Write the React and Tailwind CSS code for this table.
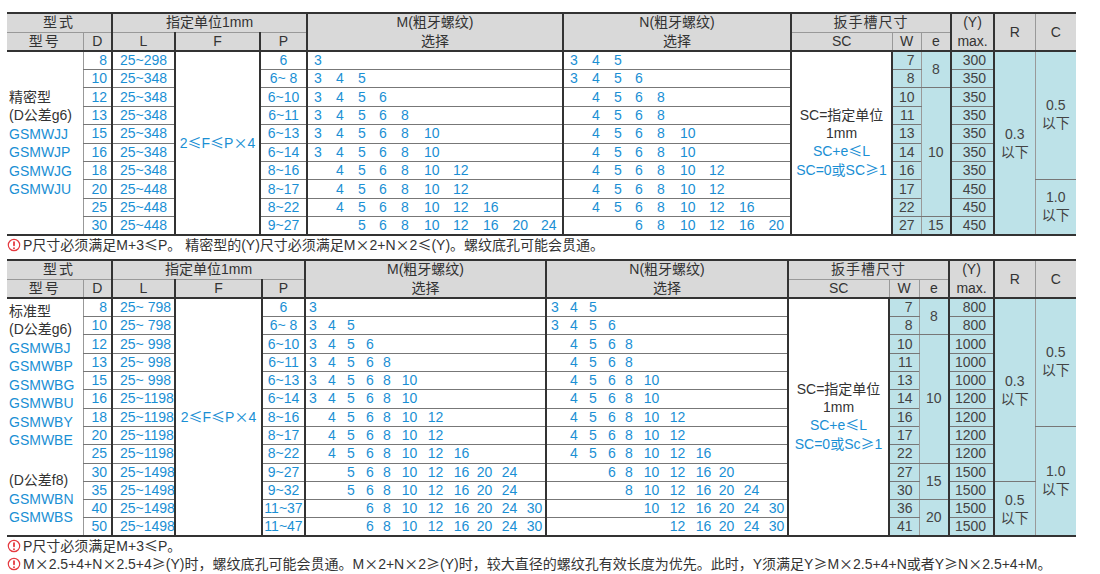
import React from 'react';

const FONT = "font-['Liberation_Sans','Noto_Sans_CJK_SC',sans-serif]";
const NARROW = "font-['Liberation_Sans_Narrow','Liberation_Sans','Noto_Sans_CJK_SC',sans-serif]";
const BLUE = 'text-[#1a8fd4]';
const TEAL = 'bg-[#bde2e8]';
const HEAD = 'bg-[#d9d9d9]';
const THICK = 'border-l-2 border-l-[#333]';
const THIN = 'border-l border-l-[#999]';

const bottom = (last) => (last ? 'border-b-2 border-b-[#333]' : 'border-b border-b-[#777]');

// ≤ ≥ × come out full width in the original, as in a CJK face
function fmt(str) {
  return str.split(/([≤≥×])/).map((part, i) =>
    /[≤≥×]/.test(part) ? (
      <span key={i} className="font-['Noto_Sans_CJK_SC',sans-serif]">{part}</span>
    ) : (
      part
    )
  );
}

const precise = {
  cols: ['w-[76px]', 'w-[29px]', 'w-[63px]', 'w-[85px]', 'w-[47px]', 'w-[256px]', 'w-[228px]', 'w-[101px]', 'w-[29px]', 'w-[30px]', 'w-[43px]', 'w-[41px]', 'w-[41px]'],
  rowH: 'h-[18.4px]',
  num: FONT,
  slots: [3, 4, 5, 6, 8, 10, 12, 16, 20, 24],
  grid: 'grid-cols-[22px_22px_21px_22px_23px_29px_30px_29.5px_28.5px_25px]',
  mPad: 'pl-[6px]',
  nPad: 'pl-[6px]',
  models: [
    { start: 0, span: 10, pad: '', lines: [['精密型', 0], ['(D公差g6)', 0], ['GSMWJJ', 1], ['GSMWJP', 1], ['GSMWJG', 1], ['GSMWJU', 1]] },
  ],
  rows: [
    [8, '25~298', '6', [3], [3, 4, 5], 7, 300],
    [10, '25~348', '6~ 8', [3, 4, 5], [3, 4, 5, 6], 8, 350],
    [12, '25~348', '6~10', [3, 4, 5, 6], [4, 5, 6, 8], 10, 350],
    [13, '25~348', '6~11', [3, 4, 5, 6, 8], [4, 5, 6, 8], 11, 350],
    [15, '25~348', '6~13', [3, 4, 5, 6, 8, 10], [4, 5, 6, 8, 10], 13, 350],
    [16, '25~348', '6~14', [3, 4, 5, 6, 8, 10], [4, 5, 6, 8, 10], 14, 350],
    [18, '25~348', '8~16', [4, 5, 6, 8, 10, 12], [4, 5, 6, 8, 10, 12], 16, 350],
    [20, '25~448', '8~17', [4, 5, 6, 8, 10, 12], [4, 5, 6, 8, 10, 12], 17, 450],
    [25, '25~448', '8~22', [4, 5, 6, 8, 10, 12, 16], [4, 5, 6, 8, 10, 12, 16], 22, 450],
    [30, '25~448', '9~27', [5, 6, 8, 10, 12, 16, 20, 24], [6, 8, 10, 12, 16, 20], 27, 450],
  ],
  e: [{ start: 0, span: 2, v: '8' }, { start: 2, span: 7, v: '10' }, { start: 9, span: 1, v: '15' }],
  r: [{ start: 0, span: 10, v: '0.3' }],
  c: [{ start: 0, span: 7, v: '0.5' }, { start: 7, span: 3, v: '1.0' }],
  scLast: 'SC=0或SC≥1',
};

const standard = {
  cols: ['w-[76px]', 'w-[29px]', 'w-[63px]', 'w-[87px]', 'w-[43px]', 'w-[241px]', 'w-[242px]', 'w-[101px]', 'w-[30px]', 'w-[30px]', 'w-[45px]', 'w-[41px]', 'w-[41px]'],
  rowH: 'h-[18.3px]',
  num: NARROW,
  slots: [3, 4, 5, 6, 8, 10, 12, 16, 20, 24, 30],
  grid: 'grid-cols-[19px_19px_19px_17px_18.8px_26px_26px_23px_25px_25px_20px]',
  mPad: 'pl-[3px]',
  nPad: 'pl-[4px]',
  models: [
    { start: 0, span: 9, pad: 'pb-[11px]', lines: [['标准型', 0], ['(D公差g6)', 0], ['GSMWBJ', 1], ['GSMWBP', 1], ['GSMWBG', 1], ['GSMWBU', 1], ['GSMWBY', 1], ['GSMWBE', 1]] },
    { start: 9, span: 4, pad: '', lines: [['(D公差f8)', 0], ['GSMWBN', 1], ['GSMWBS', 1]] },
  ],
  rows: [
    [8, '25~ 798', '6', [3], [3, 4, 5], 7, 800],
    [10, '25~ 798', '6~ 8', [3, 4, 5], [3, 4, 5, 6], 8, 800],
    [12, '25~ 998', '6~10', [3, 4, 5, 6], [4, 5, 6, 8], 10, 1000],
    [13, '25~ 998', '6~11', [3, 4, 5, 6, 8], [4, 5, 6, 8], 11, 1000],
    [15, '25~ 998', '6~13', [3, 4, 5, 6, 8, 10], [4, 5, 6, 8, 10], 13, 1000],
    [16, '25~1198', '6~14', [3, 4, 5, 6, 8, 10], [4, 5, 6, 8, 10], 14, 1200],
    [18, '25~1198', '8~16', [4, 5, 6, 8, 10, 12], [4, 5, 6, 8, 10, 12], 16, 1200],
    [20, '25~1198', '8~17', [4, 5, 6, 8, 10, 12], [4, 5, 6, 8, 10, 12], 17, 1200],
    [25, '25~1198', '8~22', [4, 5, 6, 8, 10, 12, 16], [4, 5, 6, 8, 10, 12, 16], 22, 1200],
    [30, '25~1498', '9~27', [5, 6, 8, 10, 12, 16, 20, 24], [6, 8, 10, 12, 16, 20], 27, 1500],
    [35, '25~1498', '9~32', [5, 6, 8, 10, 12, 16, 20, 24], [8, 10, 12, 16, 20, 24], 30, 1500],
    [40, '25~1498', '11~37', [6, 8, 10, 12, 16, 20, 24, 30], [10, 12, 16, 20, 24, 30], 36, 1500],
    [50, '25~1498', '11~47', [6, 8, 10, 12, 16, 20, 24, 30], [12, 16, 20, 24, 30], 41, 1500],
  ],
  e: [{ start: 0, span: 2, v: '8' }, { start: 2, span: 7, v: '10' }, { start: 9, span: 2, v: '15' }, { start: 11, span: 2, v: '20' }],
  r: [{ start: 0, span: 10, v: '0.3' }, { start: 10, span: 3, v: '0.5' }],
  c: [{ start: 0, span: 7, v: '0.5' }, { start: 7, span: 6, v: '1.0' }],
  scLast: 'SC=0或Sc≥1',
};

function Slots({ slots, grid, pad, values }) {
  return (
    <div className={`grid ${grid} ${pad}`}>
      {slots.map((s) => (
        <span key={s} className="whitespace-nowrap">{values.includes(s) ? s : ''}</span>
      ))}
    </div>
  );
}

function SpecTable({ t }) {
  const n = t.rows.length;
  const groupAt = (list, i) => list.find((g) => g.start === i);
  const ends = (g) => g.start + g.span === n;

  return (
    <table className={`table-fixed border-collapse w-[1069px] text-[14px] leading-[17px] text-[#333] ${FONT}`}>
      <colgroup>
        {t.cols.map((c, i) => (
          <col key={i} className={c} />
        ))}
      </colgroup>
      <thead>
        <tr className="h-[19px]">
          <th colSpan={2} className={`${HEAD} font-normal tracking-[2px] border-t-2 border-t-[#333] border-b border-b-[#999]`}>型式</th>
          <th colSpan={3} className={`${HEAD} font-normal border-t-2 border-t-[#333] border-b border-b-[#999] ${THICK}`}>指定单位1mm</th>
          <th rowSpan={2} className={`${HEAD} font-normal border-t-2 border-t-[#333] border-b-2 border-b-[#333] ${THICK}`}>
            <div>M(粗牙螺纹)</div>
            <div className="mt-[2px]">选择</div>
          </th>
          <th rowSpan={2} className={`${HEAD} font-normal border-t-2 border-t-[#333] border-b-2 border-b-[#333] ${THICK}`}>
            <div>N(粗牙螺纹)</div>
            <div className="mt-[2px]">选择</div>
          </th>
          <th colSpan={3} className={`${HEAD} font-normal tracking-[1px] border-t-2 border-t-[#333] border-b border-b-[#999] ${THICK}`}>扳手槽尺寸</th>
          <th rowSpan={2} className={`${HEAD} font-normal border-t-2 border-t-[#333] border-b-2 border-b-[#333] ${THICK}`}>
            <div>(Y)</div>
            <div className="mt-[2px]">max.</div>
          </th>
          <th rowSpan={2} className={`${HEAD} font-normal border-t-2 border-t-[#333] border-b-2 border-b-[#333] ${THICK}`}>R</th>
          <th rowSpan={2} className={`${HEAD} font-normal border-t-2 border-t-[#333] border-b-2 border-b-[#333] ${THIN}`}>C</th>
        </tr>
        <tr className="h-[19px]">
          <th className={`${HEAD} font-normal tracking-[2px] border-b-2 border-b-[#333]`}>型号</th>
          <th className={`${HEAD} font-normal border-b-2 border-b-[#333] ${THIN}`}>D</th>
          <th className={`${HEAD} font-normal border-b-2 border-b-[#333] ${THICK}`}>L</th>
          <th className={`${HEAD} font-normal border-b-2 border-b-[#333] ${THICK}`}>F</th>
          <th className={`${HEAD} font-normal border-b-2 border-b-[#333] ${THICK}`}>P</th>
          <th className={`${HEAD} font-normal border-b-2 border-b-[#333] ${THICK}`}>SC</th>
          <th className={`${HEAD} font-normal border-b-2 border-b-[#333] ${THIN}`}>W</th>
          <th className={`${HEAD} font-normal border-b-2 border-b-[#333] ${THIN}`}>e</th>
        </tr>
      </thead>
      <tbody>
        {t.rows.map(([d, l, p, m, nn, w, y], i) => {
          const last = i === n - 1;
          const model = groupAt(t.models, i);
          const e = groupAt(t.e, i);
          const r = groupAt(t.r, i);
          const c = groupAt(t.c, i);
          return (
            <tr key={i} className={t.rowH}>
              {model && (
                <td rowSpan={model.span} className={`p-0 pl-[2px] align-middle leading-[18.5px] ${model.pad} ${ends(model) ? 'border-b-2 border-b-[#333]' : ''}`}>
                  {model.lines.map(([txt, isBlue]) => (
                    <div key={txt} className={`whitespace-nowrap ${isBlue ? BLUE : ''}`}>{txt}</div>
                  ))}
                </td>
              )}
              <td className={`p-0 pr-[4px] text-right ${BLUE} ${t.num} ${THIN} ${bottom(last)}`}>{d}</td>
              <td className={`p-0 pl-[7px] whitespace-pre ${BLUE} ${t.num} ${THICK} ${bottom(last)}`}>{l}</td>
              {i === 0 && (
                <td rowSpan={n} className={`p-0 text-center whitespace-nowrap ${BLUE} ${THICK} border-b-2 border-b-[#333]`}>{fmt('2≤F≤P×4')}</td>
              )}
              <td className={`p-0 text-center whitespace-pre ${BLUE} ${t.num} ${THICK} ${bottom(last)}`}>{p}</td>
              <td className={`p-0 ${BLUE} ${t.num} ${THICK} ${bottom(last)}`}>
                <Slots slots={t.slots} grid={t.grid} pad={t.mPad} values={m} />
              </td>
              <td className={`p-0 ${BLUE} ${t.num} ${THICK} ${bottom(last)}`}>
                <Slots slots={t.slots} grid={t.grid} pad={t.nPad} values={nn} />
              </td>
              {i === 0 && (
                <td rowSpan={n} className={`p-0 text-center leading-[17.5px] ${THICK} border-b-2 border-b-[#333]`}>
                  <div className="whitespace-nowrap">SC=指定单位</div>
                  <div>1mm</div>
                  <div className={BLUE}>{fmt('SC+e≤L')}</div>
                  <div className={`whitespace-nowrap ${BLUE}`}>{fmt(t.scLast)}</div>
                </td>
              )}
              <td className={`p-0 pr-[6px] text-right text-[#444] ${t.num} ${TEAL} ${THICK} ${bottom(last)}`}>{w}</td>
              {e && (
                <td rowSpan={e.span} className={`p-0 text-center text-[#444] ${t.num} ${TEAL} ${THIN} ${bottom(ends(e))}`}>{e.v}</td>
              )}
              <td className={`p-0 pr-[7px] text-right text-[#444] ${t.num} ${TEAL} ${THICK} ${bottom(last)}`}>{y}</td>
              {r && (
                <td rowSpan={r.span} className={`p-0 text-center text-[#444] leading-[18px] ${TEAL} ${THICK} ${bottom(ends(r))}`}>
                  <div>{r.v}</div>
                  <div>以下</div>
                </td>
              )}
              {c && (
                <td rowSpan={c.span} className={`p-0 pb-[3px] text-center text-[#444] leading-[18px] ${TEAL} ${THIN} ${bottom(ends(c))}`}>
                  <div>{c.v}</div>
                  <div>以下</div>
                </td>
              )}
            </tr>
          );
        })}
      </tbody>
    </table>
  );
}

function Warn() {
  return (
    <svg width="14" height="14" viewBox="0 0 14 14" className="shrink-0 mr-[2px]">
      <circle cx="7" cy="7" r="5.7" fill="none" stroke="#e5393f" strokeWidth="1.2" />
      <rect x="6.1" y="3.2" width="1.8" height="5" rx="0.9" fill="#e5393f" />
      <circle cx="7" cy="10.2" r="0.95" fill="#e5393f" />
    </svg>
  );
}

function Note({ children }) {
  return (
    <div className={`flex items-center h-[18px] text-[14px] text-[#333] whitespace-nowrap ${FONT}`}>
      <Warn />
      <span>{fmt(children)}</span>
    </div>
  );
}

export default function App() {
  return (
    <div className="w-[1100px] h-[574px] bg-white pt-[12px] pl-[7px] overflow-hidden">
      <SpecTable t={precise} />
      <Note>P尺寸必须满足M+3≤P。 精密型的(Y)尺寸必须满足M×2+N×2≤(Y)。螺纹底孔可能会贯通。</Note>
      <div className="mt-[5px]">
        <SpecTable t={standard} />
      </div>
      <div>
        <Note>P尺寸必须满足M+3≤P。</Note>
        <Note>M×2.5+4+N×2.5+4≥(Y)时，螺纹底孔可能会贯通。M×2+N×2≥(Y)时，较大直径的螺纹孔有效长度为优先。此时，Y须满足Y≥M×2.5+4+N或者Y≥N×2.5+4+M。</Note>
      </div>
    </div>
  );
}
